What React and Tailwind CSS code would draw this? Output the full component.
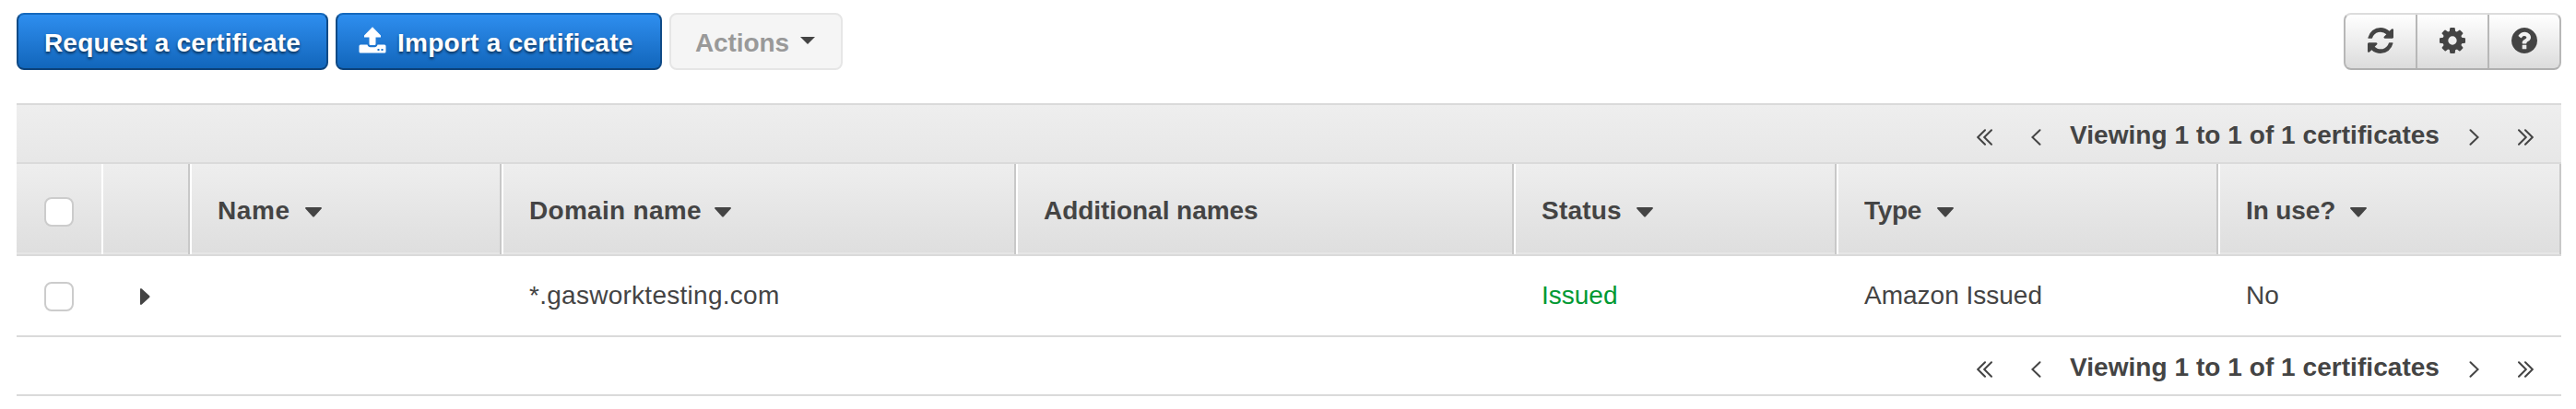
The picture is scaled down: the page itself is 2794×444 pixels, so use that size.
const columns = [
  { label: "Name", labelClass: "w-[95px] tracking-[0.6px]", sort: true, value: "" },
  { label: "Domain name", labelClass: "w-[201px] tracking-[0.3px]", sort: true, value: "*.gasworktesting.com", valueClass: "tracking-[0.27px]" },
  { label: "Additional names", labelClass: "tracking-[-0.05px]", sort: false, value: "" },
  { label: "Status", labelClass: "w-[103px] tracking-[0.2px]", sort: true, value: "Issued", valueClass: "text-[#009933]" },
  { label: "Type", labelClass: "w-[79px] tracking-[-0.3px]", sort: true, value: "Amazon Issued", valueClass: "" },
  { label: "In use?", labelClass: "w-[113px] tracking-[-0.1px]", sort: true, value: "No", valueClass: "" },
];

const grid = "grid grid-cols-[92px_96px_338px_558px_540px_350px_414px_372px]";

function UploadIcon() {
  return (
    <svg className="mb-[6px] h-[29px] w-[30px]" viewBox="0 0 30 29" fill="#fff">
      <path d="M15 0.2 24 9.500V11.500H18.500V18.500Q18.500 20 17.500 20H12.500Q11.500 20 11.500 18.500V11.500H6V9.500Z" />
      <path
        fillRule="evenodd"
        d="M2 19.500H9.500C10 21.300 11.200 22.200 12.500 22.200H17.500C18.800 22.200 20 21.300 20.500 19.500H28A1.500 1.500 0 0 1 29.500 21V27A1.500 1.500 0 0 1 28 28.500H2A1.500 1.500 0 0 1 0.500 27V21A1.500 1.500 0 0 1 2 19.500ZM20.500 24V26H22.500V24ZM24.500 24V26H26.500V24Z"
      />
    </svg>
  );
}

function RefreshIcon() {
  return (
    <svg className="h-7 w-7" viewBox="0 0 1536 1536" fill="#444">
      <path d="M1511 928q0 5-1 7-64 268-268 434.500T764 1536q-146 0-282.500-55T238 1324l-129 129q-19 19-45 19t-45-19-19-45V960q0-26 19-45t45-19h448q26 0 45 19t19 45-19 45l-137 137q71 66 161 102t187 36q134 0 250-65t186-179q11-17 53-117 8-23 30-23h192q13 0 22.500 9.500t9.500 22.500zm25-800v448q0 26-19 45t-45 19h-448q-26 0-45-19t-19-45 19-45l138-138Q969 256 768 256q-134 0-250 65T332 500q-11 17-53 117-8 23-30 23H50q-13 0-22.500-9.500T18 608v-7q65-268 270-434.500T768 0q146 0 284 55.500T1297 212l130-129q19-19 45-19t45 19 19 45z" />
    </svg>
  );
}

function GearIcon() {
  return (
    <svg className="h-7 w-7" viewBox="0 0 1536 1536" fill="#444">
      <path d="M1024 768q0-106-75-181t-181-75-181 75-75 181 75 181 181 75 181-75 75-181zm512-109v222q0 12-8 23t-20 13l-185 28q-19 54-39 91 35 50 107 138 10 12 10 25t-9 23q-27 37-99 108t-94 71q-12 0-26-9l-138-108q-44 23-91 38-16 136-29 186-7 28-36 28H657q-14 0-24.500-8.500T621 1506l-28-184q-49-16-90-37l-141 107q-10 9-25 9-14 0-25-11-126-114-165-168-7-10-7-23 0-12 8-23 15-21 51-66.500t54-70.500q-27-50-41-99L29 913q-13-2-21-12.500T0 877V655q0-12 8-23t19-13l186-28q14-46 39-92-40-57-107-138-10-12-10-24 0-10 9-23 26-36 98.500-107.500T337 135q13 0 26 10l138 107q44-23 91-38 16-136 29-186 7-28 36-28h222q14 0 24.500 8.500T915 30l28 184q49 16 90 37l142-107q9-9 24-9 13 0 25 10 129 119 165 170 7 8 7 22 0 12-8 23-15 21-51 66.500t-54 70.500q26 50 41 98l183 28q13 2 21 12.500t8 23.500z" />
    </svg>
  );
}

function HelpIcon() {
  return (
    <svg className="h-7 w-7" viewBox="0 0 1536 1536" fill="#444">
      <path d="M896 1248v-192q0-14-9-23t-23-9H672q-14 0-23 9t-9 23v192q0 14 9 23t23 9h192q14 0 23-9t9-23zm256-672q0-88-55.500-163T958 297t-170-41q-243 0-371 213-15 24 8 42l132 100q7 6 19 6 16 0 25-12 53-68 86-92 34-24 86-24 48 0 85.500 26t37.500 59q0 38-20 61t-68 45q-63 28-115.500 86.500T640 892v36q0 14 9 23t23 9h192q14 0 23-9t9-23q0-19 21.500-49.500T972 829q32-18 49-28.500t46-35 44.500-48 28-60.500 12.500-81zm384 192q0 209-103 385.500T1153.500 1433 768 1536t-385.500-103T103 1153.500 0 768t103-385.500T382.500 103 768 0t385.500 103T1433 382.500 1536 768z" />
    </svg>
  );
}

function Single({ flip }) {
  return (
    <svg className={"mt-2 h-[18px] w-[11px] shrink-0 " + (flip ? "rotate-180" : "")} viewBox="0 0 11 18" fill="none" stroke="#444" strokeWidth="2" strokeLinecap="round">
      <path d="M9.500 1.200 1.400 9 9.500 16.800" />
    </svg>
  );
}

function Double({ flip }) {
  return (
    <svg className={"mt-2 h-[18px] w-[17px] shrink-0 " + (flip ? "rotate-180" : "")} viewBox="0 0 17 18" fill="none" stroke="#444" strokeWidth="2" strokeLinecap="round">
      <path d="M9 1.200 1.200 9 9 16.800M16 1.200 8.200 9 16 16.800" />
    </svg>
  );
}

function Pager() {
  return (
    <div className="flex h-[62px] items-center justify-end pr-[30px]">
      <div className="flex gap-[42px]">
        <Double />
        <Single />
      </div>
      <span className="mt-[3px] ml-[31px] w-[433px] text-[28px] leading-[31px] font-bold tracking-[0.05px] whitespace-nowrap">
        Viewing 1 to 1 of 1 certificates
      </span>
      <div className="flex gap-[42px]">
        <Single flip />
        <Double flip />
      </div>
    </div>
  );
}

function Checkbox() {
  return <span className="block h-8 w-8 rounded-lg border-2 border-[#ccc] bg-white" />;
}

const blue =
  "flex h-[62px] items-center rounded-lg border-2 border-t-[#1569bd] border-x-[#0f4a86] border-b-[#0c427a] bg-linear-to-b from-[#2e8eef] to-[#1166bb] pt-[3px] text-[28px] leading-[31px] font-bold text-white whitespace-nowrap [text-shadow:0_2px_3px_rgba(0,0,0,0.6)]";

export default function App() {
  return (
    <div className="h-[444px] w-[2794px] overflow-hidden bg-white pt-[14px] pr-4 pl-[18px] font-['Liberation_Sans',Arial,sans-serif] text-[#444]">
      <div className="flex justify-between">
        <div className="flex gap-2">
          <button className={blue + " w-[338px] justify-center tracking-[0.2px]"}>Request a certificate</button>
          <button className={blue + " w-[354px] pl-[23px] tracking-[0.25px]"}>
            <UploadIcon />
            <span className="ml-3">Import a certificate</span>
          </button>
          <button className="flex h-[62px] w-[188px] items-center rounded-lg border-2 border-[#e6e6e6] bg-[#f5f5f5] pt-[3px] pl-[26px] text-left text-[28px] leading-[31px] font-bold text-[#999]">
            <span className="w-[114px] tracking-[-0.1px]">Actions</span>
            <svg className="mb-[5px] h-2 w-4" viewBox="0 0 16 8" fill="#444">
              <path d="M0 0H16L8 8Z" />
            </svg>
          </button>
        </div>
        <div className="flex h-[62px] w-[236px] divide-x-2 divide-[#b7b7b7] overflow-hidden rounded-lg border-2 border-t-[#dcdcdc] border-x-[#b7b7b7] border-b-[#b0b0b0] bg-linear-to-b from-white to-[#dcdcdc]">
          <button className="flex w-[78px] items-center justify-center pb-[2px]">
            <RefreshIcon />
          </button>
          <button className="flex w-[78px] items-center justify-center pb-[2px]">
            <GearIcon />
          </button>
          <button className="flex w-[76px] items-center justify-center pb-[2px]">
            <HelpIcon />
          </button>
        </div>
      </div>

      <div className="mt-9">
        <div className="border-y-2 border-[#dadada] bg-linear-to-b from-[#eeeeee] to-[#e7e7e7]">
          <Pager />
        </div>
        <div className={grid + " h-[100px] border-b-2 border-[#dadada] bg-linear-to-b from-[#eeeeee] to-[#dedede]"}>
          <div className="flex items-center border-b-2 border-[#e6e6e6] pt-2 pl-[30px]">
            <Checkbox />
          </div>
          <div className="flex border-r-2 border-l-2 border-r-[#c8c8c8] border-l-white">
            <div className="flex-1 border-b-2 border-[#e6e6e6]" />
          </div>
          {columns.map((c) => (
            <div key={c.label} className="flex border-r-2 border-l-2 border-r-[#c8c8c8] border-l-white">
              <div className="flex flex-1 items-center border-b-2 border-[#e6e6e6] pt-[5px] pl-7 text-[28px] leading-[31px] font-bold whitespace-nowrap">
                <span className={c.labelClass}>{c.label}</span>
                {c.sort && (
                  <svg className="mt-1 h-[11px] w-[18px]" viewBox="0 0 18 11" fill="#444">
                    <path d="M1 0H17Q18.500 0.500 17.500 1.800L10 10Q9 11 8 10L0.500 1.800Q-0.500 0.500 1 0Z" />
                  </svg>
                )}
              </div>
            </div>
          ))}
        </div>
        <div className={grid + " h-[88px] items-center border-b-2 border-[#dadada]"}>
          <div className="pt-[2px] pl-[30px]">
            <Checkbox />
          </div>
          <div className="pt-[2px] pl-[42px]">
            <svg className="h-[18px] w-[11px]" viewBox="0 0 11 18" fill="#444">
              <path d="M0 1V17Q0.500 18.500 1.800 17.500L10 10Q11 9 10 8L1.800 0.500Q0.500 -0.500 0 1Z" />
            </svg>
          </div>
          {columns.map((c) => (
            <div key={c.label} className={"pt-px pb-[2px] pl-[30px] text-[28px] leading-[31px] whitespace-nowrap " + (c.valueClass || "")}>
              {c.value}
            </div>
          ))}
        </div>
        <div className="border-b-2 border-[#dadada]">
          <Pager />
        </div>
      </div>
    </div>
  );
}
